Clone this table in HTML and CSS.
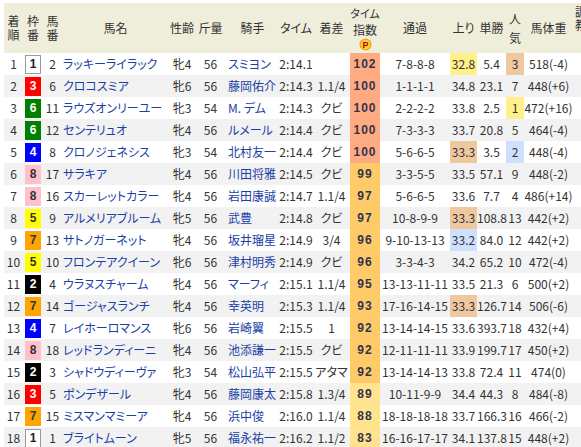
FILE: index.html
```html
<!DOCTYPE html>
<html lang="ja">
<head>
  <meta charset="UTF-8">
  <title>レース結果</title>
  <link rel="stylesheet" href="styles.css">
</head>
<body>
  <div class="race">
    <table class="result">
      <colgroup>
        <col class="c-rank"><col class="c-waku"><col class="c-uma"><col class="c-name">
        <col class="c-sex"><col class="c-kin"><col class="c-jockey"><col class="c-time">
        <col class="c-sa"><col class="c-idx"><col class="c-pass"><col class="c-agari">
        <col class="c-odds"><col class="c-ninki"><col class="c-weight"><col class="c-chokyo">
      </colgroup>
      <thead>
        <tr>
          <th>着順</th>
          <th>枠番</th>
          <th>馬番</th>
          <th>馬名</th>
          <th>性齢</th>
          <th>斤量</th>
          <th>騎手</th>
          <th>タイム</th>
          <th>着差</th>
          <th class="idx-head">
            <div class="idx-small">タイム</div>
            <div class="idx-label">指数</div>
            <svg class="p-icon" width="13" height="13" viewBox="0 0 13 13">
              <circle cx="6.5" cy="6.5" r="6" fill="#f5a300"/>
              <circle cx="6.5" cy="6.5" r="4.8" fill="#ffcf3a"/>
              <text x="6.6" y="10" text-anchor="middle" font-size="9" font-weight="bold" fill="#b30000" font-family="Liberation Sans, sans-serif">P</text>
            </svg>
          </th>
          <th>通過</th>
          <th>上り</th>
          <th>単勝</th>
          <th class="ninki-head">人気</th>
          <th>馬体重</th>
          <th class="chokyo-head">調教</th>
        </tr>
      </thead>
      <tbody>
        <tr>
          <td class="n">1</td><td><span class="waku w1">1</span></td><td class="n">2</td>
          <td class="name">ラッキーライラック</td><td>牝4</td><td class="n">56</td><td class="jockey">スミヨン</td>
          <td class="n">2:14.1</td><td class="n"></td><td class="idx ix-a">102</td>
          <td class="n">7-8-8-8</td><td class="n hl-1">32.8</td><td class="n">5.4</td><td class="n hl-3">3</td><td class="n">518(-4)</td><td></td>
        </tr>
        <tr class="even">
          <td class="n">2</td><td><span class="waku w3">3</span></td><td class="n">6</td>
          <td class="name">クロコスミア</td><td>牝6</td><td class="n">56</td><td class="jockey">藤岡佑介</td>
          <td class="n">2:14.3</td><td class="n">1.1/4</td><td class="idx ix-a">100</td>
          <td class="n">1-1-1-1</td><td class="n">34.8</td><td class="n">23.1</td><td class="n">7</td><td class="n">448(+6)</td><td></td>
        </tr>
        <tr>
          <td class="n">3</td><td><span class="waku w6">6</span></td><td class="n">11</td>
          <td class="name">ラウズオンリーユー</td><td>牝3</td><td class="n">54</td><td class="jockey">M. デム</td>
          <td class="n">2:14.3</td><td>クビ</td><td class="idx ix-a">100</td>
          <td class="n">2-2-2-2</td><td class="n">33.8</td><td class="n">2.5</td><td class="n hl-1">1</td><td class="n">472(+16)</td><td></td>
        </tr>
        <tr class="even">
          <td class="n">4</td><td><span class="waku w6">6</span></td><td class="n">12</td>
          <td class="name">センテリュオ</td><td>牝4</td><td class="n">56</td><td class="jockey">ルメール</td>
          <td class="n">2:14.4</td><td>クビ</td><td class="idx ix-a">100</td>
          <td class="n">7-3-3-3</td><td class="n">33.7</td><td class="n">20.8</td><td class="n">5</td><td class="n">464(-4)</td><td></td>
        </tr>
        <tr>
          <td class="n">5</td><td><span class="waku w4">4</span></td><td class="n">8</td>
          <td class="name">クロノジェネシス</td><td>牝3</td><td class="n">54</td><td class="jockey">北村友一</td>
          <td class="n">2:14.4</td><td>クビ</td><td class="idx ix-a">100</td>
          <td class="n">5-6-6-5</td><td class="n hl-3">33.3</td><td class="n">3.5</td><td class="n hl-2">2</td><td class="n">448(-4)</td><td></td>
        </tr>
        <tr class="even">
          <td class="n">6</td><td><span class="waku w8">8</span></td><td class="n">17</td>
          <td class="name">サラキア</td><td>牝4</td><td class="n">56</td><td class="jockey">川田将雅</td>
          <td class="n">2:14.5</td><td>クビ</td><td class="idx ix-b">99</td>
          <td class="n">3-3-5-5</td><td class="n">33.5</td><td class="n">57.1</td><td class="n">9</td><td class="n">448(-2)</td><td></td>
        </tr>
        <tr>
          <td class="n">7</td><td><span class="waku w8">8</span></td><td class="n">16</td>
          <td class="name">スカーレットカラー</td><td>牝4</td><td class="n">56</td><td class="jockey">岩田康誠</td>
          <td class="n">2:14.7</td><td class="n">1.1/4</td><td class="idx ix-b">97</td>
          <td class="n">5-6-6-5</td><td class="n">33.6</td><td class="n">7.7</td><td class="n">4</td><td class="n">486(+14)</td><td></td>
        </tr>
        <tr class="even">
          <td class="n">8</td><td><span class="waku w5">5</span></td><td class="n">9</td>
          <td class="name">アルメリアブルーム</td><td>牝5</td><td class="n">56</td><td class="jockey">武豊</td>
          <td class="n">2:14.8</td><td>クビ</td><td class="idx ix-b">97</td>
          <td class="n">10-8-9-9</td><td class="n hl-3">33.3</td><td class="n">108.8</td><td class="n">13</td><td class="n">442(+2)</td><td></td>
        </tr>
        <tr>
          <td class="n">9</td><td><span class="waku w7">7</span></td><td class="n">13</td>
          <td class="name">サトノガーネット</td><td>牝4</td><td class="n">56</td><td class="jockey">坂井瑠星</td>
          <td class="n">2:14.9</td><td class="n">3/4</td><td class="idx ix-b">96</td>
          <td class="n">9-10-13-13</td><td class="n hl-2">33.2</td><td class="n">84.0</td><td class="n">12</td><td class="n">442(+2)</td><td></td>
        </tr>
        <tr class="even">
          <td class="n">10</td><td><span class="waku w5">5</span></td><td class="n">10</td>
          <td class="name">フロンテアクイーン</td><td>牝6</td><td class="n">56</td><td class="jockey">津村明秀</td>
          <td class="n">2:14.9</td><td>クビ</td><td class="idx ix-b">96</td>
          <td class="n">3-3-4-3</td><td class="n">34.2</td><td class="n">65.2</td><td class="n">10</td><td class="n">472(-4)</td><td></td>
        </tr>
        <tr>
          <td class="n">11</td><td><span class="waku w2">2</span></td><td class="n">4</td>
          <td class="name">ウラヌスチャーム</td><td>牝4</td><td class="n">56</td><td class="jockey">マーフィ</td>
          <td class="n">2:15.1</td><td class="n">1.1/4</td><td class="idx ix-b">95</td>
          <td class="n">13-13-11-11</td><td class="n">33.5</td><td class="n">21.3</td><td class="n">6</td><td class="n">500(+2)</td><td></td>
        </tr>
        <tr class="even">
          <td class="n">12</td><td><span class="waku w7">7</span></td><td class="n">14</td>
          <td class="name">ゴージャスランチ</td><td>牝4</td><td class="n">56</td><td class="jockey">幸英明</td>
          <td class="n">2:15.3</td><td class="n">1.1/4</td><td class="idx ix-b">93</td>
          <td class="n">17-16-14-15</td><td class="n hl-3">33.3</td><td class="n">126.7</td><td class="n">14</td><td class="n">506(-6)</td><td></td>
        </tr>
        <tr>
          <td class="n">13</td><td><span class="waku w4">4</span></td><td class="n">7</td>
          <td class="name">レイホーロマンス</td><td>牝6</td><td class="n">56</td><td class="jockey">岩崎翼</td>
          <td class="n">2:15.5</td><td class="n">1</td><td class="idx ix-b">92</td>
          <td class="n">13-14-14-15</td><td class="n">33.6</td><td class="n">393.7</td><td class="n">18</td><td class="n">432(+4)</td><td></td>
        </tr>
        <tr class="even">
          <td class="n">14</td><td><span class="waku w8">8</span></td><td class="n">18</td>
          <td class="name">レッドランディーニ</td><td>牝4</td><td class="n">56</td><td class="jockey">池添謙一</td>
          <td class="n">2:15.5</td><td>クビ</td><td class="idx ix-b">92</td>
          <td class="n">12-11-11-11</td><td class="n">33.9</td><td class="n">199.7</td><td class="n">17</td><td class="n">450(+2)</td><td></td>
        </tr>
        <tr>
          <td class="n">15</td><td><span class="waku w2">2</span></td><td class="n">3</td>
          <td class="name">シャドウディーヴァ</td><td>牝3</td><td class="n">54</td><td class="jockey">松山弘平</td>
          <td class="n">2:15.5</td><td>アタマ</td><td class="idx ix-b">92</td>
          <td class="n">13-14-14-13</td><td class="n">33.8</td><td class="n">72.4</td><td class="n">11</td><td class="n">474(0)</td><td></td>
        </tr>
        <tr class="even">
          <td class="n">16</td><td><span class="waku w3">3</span></td><td class="n">5</td>
          <td class="name">ポンデザール</td><td>牝4</td><td class="n">56</td><td class="jockey">藤岡康太</td>
          <td class="n">2:15.8</td><td class="n">1.3/4</td><td class="idx ix-c">89</td>
          <td class="n">10-11-9-9</td><td class="n">34.4</td><td class="n">44.3</td><td class="n">8</td><td class="n">484(-8)</td><td></td>
        </tr>
        <tr>
          <td class="n">17</td><td><span class="waku w7">7</span></td><td class="n">15</td>
          <td class="name">ミスマンマミーア</td><td>牝4</td><td class="n">56</td><td class="jockey">浜中俊</td>
          <td class="n">2:16.0</td><td class="n">1.1/4</td><td class="idx ix-c">88</td>
          <td class="n">18-18-18-18</td><td class="n">33.7</td><td class="n">166.3</td><td class="n">16</td><td class="n">466(-2)</td><td></td>
        </tr>
        <tr class="even">
          <td class="n">18</td><td><span class="waku w1">1</span></td><td class="n">1</td>
          <td class="name">ブライトムーン</td><td>牝5</td><td class="n">56</td><td class="jockey">福永祐一</td>
          <td class="n">2:16.2</td><td class="n">1.1/2</td><td class="idx ix-c">83</td>
          <td class="n">16-16-17-17</td><td class="n">34.1</td><td class="n">137.8</td><td class="n">15</td><td class="n">448(+2)</td><td></td>
        </tr>
      </tbody>
    </table>
  </div>
</body>
</html>
```

FILE: styles.css
```css
/* Base */
body {
  margin: 0;
  overflow: hidden;
  background-color: #fff;
  font-family: "Noto Sans CJK JP", sans-serif;
  font-size: 12px;
  color: #333;
}
.race {
  padding: 3px 0 0 4px;
}

/* Result table */
.result {
  border-collapse: collapse;
  table-layout: fixed;
  width: 585px;
}
.c-rank { width: 19px; }
.c-waku { width: 20px; }
.c-uma { width: 19px; }
.c-name { width: 107px; }
.c-sex { width: 26px; }
.c-kin { width: 31px; }
.c-jockey { width: 53px; }
.c-time { width: 34px; }
.c-sa { width: 37px; }
.c-idx { width: 30px; }
.c-pass { width: 70px; }
.c-agari { width: 27px; }
.c-odds { width: 29px; }
.c-ninki { width: 18px; }
.c-weight { width: 49px; }
.c-chokyo { width: 16px; }

.result th {
  background-color: #efeedb;
  font-weight: normal;
  height: 48px;
  padding: 0;
  line-height: 14px;
  vertical-align: middle;
  font-feature-settings: "palt";
}
.result td {
  height: 22px;
  padding: 0;
  text-align: center;
  white-space: nowrap;
  line-height: 22px;
  font-feature-settings: "palt";
}
.result tr.even td {
  background-color: #f2f2f2;
}
.result td.n {
  font-family: "Liberation Sans Narrow", "Noto Sans CJK JP", sans-serif;
}
.result td.name,
.result td.jockey {
  text-align: left;
  color: #1a3fa6;
  overflow: hidden;
}
.result td.name { padding-left: 1px; }
.result td.jockey { padding-left: 2px; }

/* Header details */
.idx-small {
  font-size: 11px;
  line-height: 16px;
}
.idx-label {
  line-height: 17px;
}
.p-icon {
  display: block;
  margin: 0 auto;
}
.ninki-head { line-height: 19px !important; }
.chokyo-head {
  vertical-align: top !important;
  text-align: left;
  padding: 2px 0 0 2px !important;
  line-height: 13px !important;
  overflow: hidden;
}

/* Frame boxes */
.waku {
  display: inline-block;
  box-sizing: border-box;
  width: 16px;
  height: 19px;
  line-height: 19px;
  font-family: "Liberation Sans", sans-serif;
  font-weight: bold;
  font-size: 12px;
  vertical-align: middle;
  margin-top: -2px;
}
.w1 { background-color: #fff; color: #222; border: 1px solid #999; line-height: 17px; }
.w2 { background-color: #000; color: #fff; }
.w3 { background-color: #f00; color: #fff; }
.w4 { background-color: #00f; color: #fff; }
.w5 { background-color: #ff0; color: #333; }
.w6 { background-color: #008000; color: #fff; }
.w7 { background-color: #ffa500; color: #333; }
.w8 { background-color: #ffc0cb; color: #333; }

/* Time index */
.result td.idx {
  font-family: "Liberation Sans", sans-serif;
  font-weight: bold;
  color: #33334d;
  letter-spacing: 1px;
}
.result tr td.ix-a { background-color: #ffab82; }
.result tr td.ix-b { background-color: #ffcb69; }
.result tr td.ix-c { background-color: #ffe38e; }

/* Top three highlights */
.result tr td.hl-1 { background-color: #fff08a; }
.result tr td.hl-2 { background-color: #cfe0ff; }
.result tr td.hl-3 { background-color: #f0c8a0; }
```
